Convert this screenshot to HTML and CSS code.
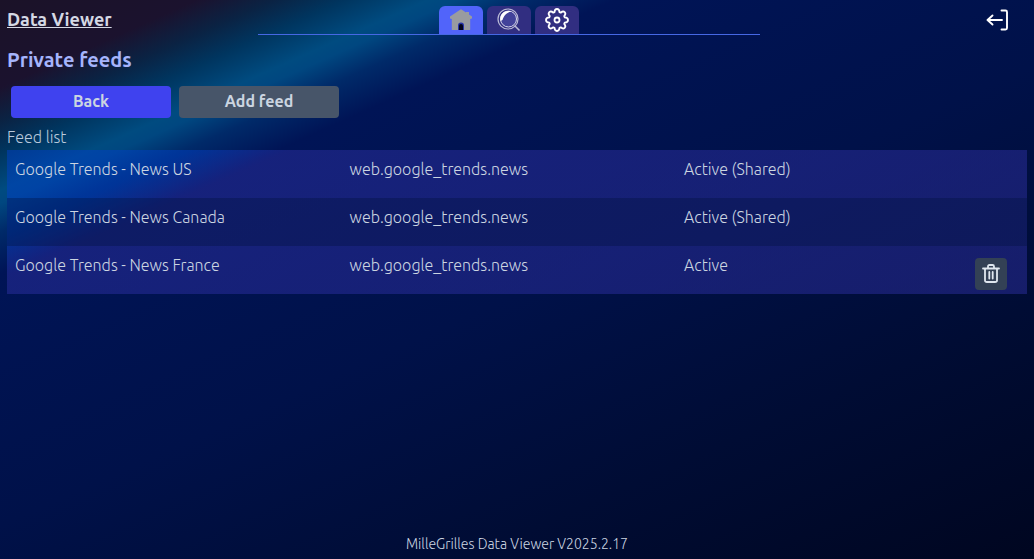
FILE: index.html
```html
<!DOCTYPE html>
<html lang="en">
<head>
<meta charset="utf-8">
<meta name="viewport" content="width=device-width, initial-scale=1">
<title>Data Viewer</title>
<link rel="stylesheet" href="styles.css">
</head>
<body class="page">
<header class="header">
  <a class="brand" href="#">Data Viewer</a>
  <nav class="tabs" aria-label="Main">
    <a class="tab tab-active" href="#" aria-label="Home">
      <svg width="24" height="24" viewBox="0 0 24 24"><path d="M11.500 1.500 1 8.500v2l1.800.500v10.500q0 .5.500.5h17.400q.5 0 .5-.5V11l1.800-.500v-2l-3-2V4h-3v.500L12.500 1.500Z" fill="#999ba0"/><path d="M9 22v-4.500a3 3 0 0 1 6 0V22Z" fill="#2632a8"/><path d="M10 22v-4a2 2 0 0 1 4 0v4Z" fill="#02031c"/></svg>
    </a>
    <a class="tab" href="#" aria-label="Search">
      <svg width="24" height="24" viewBox="0 0 24 24" fill="none"><circle cx="11" cy="11" r="10" stroke="#b9b9d6" stroke-width="1.200"/><circle cx="11.500" cy="11" r="8" fill="#42429a" stroke="#d9d9ee" stroke-width="1"/><path d="M3.500 13C2 6 8 1.500 14 3.500 9 5 7 8 5.500 12Z" fill="#fff"/><path d="m17.500 17.500 5 5" stroke="#b9b9d6" stroke-width="1.600"/></svg>
    </a>
    <a class="tab" href="#" aria-label="Settings">
      <svg width="24" height="24" viewBox="0 0 24 24" fill="none" stroke="#fff" stroke-width="1.800" stroke-linejoin="round"><path d="M9.500 4.200Q9.700 1 12 1t2.500 3.200l1.200.500q2.400-2.100 4-.500t-.500 4l.500 1.200Q23 9.700 23 12t-3.300 2.600l-.500 1.200q2.100 2.400.500 4t-4-.500l-1.200.500Q14.300 23 12 23t-2.500-3.200l-1.200-.500q-2.400 2.100-4 .500t.500-4l-.500-1.200Q1 14.300 1 12t3.300-2.600l.500-1.200q-2.100-2.400-.500-4t4 .500Z"/><circle cx="12" cy="12" r="2.500"/></svg>
    </a>
  </nav>
  <button class="logout" type="button" aria-label="Log out">
    <svg width="24" height="24" viewBox="0 0 24 24" fill="none" stroke="#fff" stroke-width="1.900" stroke-linecap="round" stroke-linejoin="round"><path d="M16.500 2.500h4q1.500 0 1.500 1.500v16q0 1.500-1.500 1.500h-4M17 12H2.500m5-4.500L2.500 12l5 4.500"/></svg>
  </button>
</header>
<main class="content">
  <h1 class="title">Private feeds</h1>
  <div class="actions">
    <button class="button button-primary" type="button">Back</button>
    <button class="button" type="button">Add feed</button>
  </div>
  <p class="caption" id="feed-list">Feed list</p>
  <table class="feeds" aria-labelledby="feed-list">
    <colgroup><col class="col-wide"><col class="col-wide"><col class="col-status"><col></colgroup>
    <tbody>
      <tr><td>Google Trends - News US</td><td>web.google_trends.news</td><td>Active (Shared)</td><td></td></tr>
      <tr><td>Google Trends - News Canada</td><td>web.google_trends.news</td><td>Active (Shared)</td><td></td></tr>
      <tr><td>Google Trends - News France</td><td>web.google_trends.news</td><td>Active</td>
        <td class="cell-action"><button class="delete" type="button" aria-label="Delete feed"><svg width="18" height="20" viewBox="0 0 18 20" fill="none" stroke="#dfe7ef" stroke-width="1.800" stroke-linecap="round" stroke-linejoin="round"><path d="M1 4.500h16M6 4V2.500Q6 1 7.500 1h3Q12 1 12 2.500V4M3 5v11.500Q3 18 5 18h8q2 0 2-1.500V5M7.300 8v6.500M10.700 8v6.500"/></svg></button></td></tr>
    </tbody>
  </table>
</main>
<footer class="footer">MilleGrilles Data Viewer V2025.2.17</footer>
</body>
</html>
```

FILE: styles.css
```css
* {
  box-sizing: border-box;
}

.page {
  display: flex;
  flex-direction: column;
  min-height: 100vh;
  margin: 0;
  font: 300 16px/24px Ubuntu, "Open Sans", "Noto Sans", sans-serif;
  color: #cbd5e1;
  background: linear-gradient(156deg, #1b1228 0, #1b122e 80px, #0a2344 112px, #00355f 140px, #004b80 174px, #004780 186px, #002a69 212px, #001456 250px, #001149 480px, #000c34 700px, #000620 932px);
}

.header {
  display: grid;
  grid-template-columns: 1fr 2fr 1fr;
  padding: 6px 23px 0 7px;
}

.brand {
  justify-self: start;
  font-size: 18px;
  font-weight: 600;
  line-height: 26px;
  color: #d5d8e4;
}

.tabs {
  display: flex;
  justify-content: center;
  gap: 4px;
  border-bottom: 1px solid #4668e4;
}

.tab {
  display: flex;
  justify-content: center;
  align-items: center;
  width: 44px;
  height: 28px;
  border-radius: 6px 6px 0 0;
  background: #312e81;
}

.tab-active {
  background: #5164fa;
}

.logout {
  display: flex;
  align-items: center;
  justify-self: end;
  height: 28px;
  padding: 0 2px;
  border: 0;
  background: none;
}

.content {
  flex: 1;
  padding: 11px 7px 0;
}

.title {
  margin: 0;
  font-size: 20px;
  font-weight: 600;
  line-height: 28px;
  color: #a5b4fc;
}

.actions {
  display: flex;
  gap: 8px;
  padding: 12px 4px 7px;
}

.button {
  width: 160px;
  height: 32px;
  padding: 0 0 2px;
  border: 0;
  border-radius: 4px;
  font: inherit;
  font-weight: 600;
  color: #cbd5e1;
  background: #475569;
}

.button-primary {
  background: #3f42ef;
}

.caption {
  margin: 0 0 1px;
  color: #b9c9dc;
}

.feeds {
  width: 100%;
  table-layout: fixed;
  border-collapse: collapse;
  background: linear-gradient(156deg, rgba(0, 64, 200, 0.5) 0, rgba(0, 64, 200, 0.5) 75px, rgba(49, 50, 170, 0.45) 115px, rgba(49, 50, 170, 0.45) 100%);
}

.feeds tr {
  height: 48px;
}

.feeds tr:nth-child(even) {
  background: rgba(0, 16, 60, 0.35);
}

.feeds td {
  padding: 7px 8px 0;
  vertical-align: top;
}

.col-wide {
  width: 32.8%;
}

.col-status {
  width: 24%;
}

.feeds .cell-action {
  padding: 12px 20px 4px 8px;
}

.delete {
  display: flex;
  justify-content: center;
  align-items: center;
  width: 32px;
  height: 32px;
  margin-left: auto;
  padding: 0;
  border: 0;
  border-radius: 4px;
  background: #334155;
}

.footer {
  padding-bottom: 5px;
  font-size: 14px;
  line-height: 20px;
  text-align: center;
}
```
